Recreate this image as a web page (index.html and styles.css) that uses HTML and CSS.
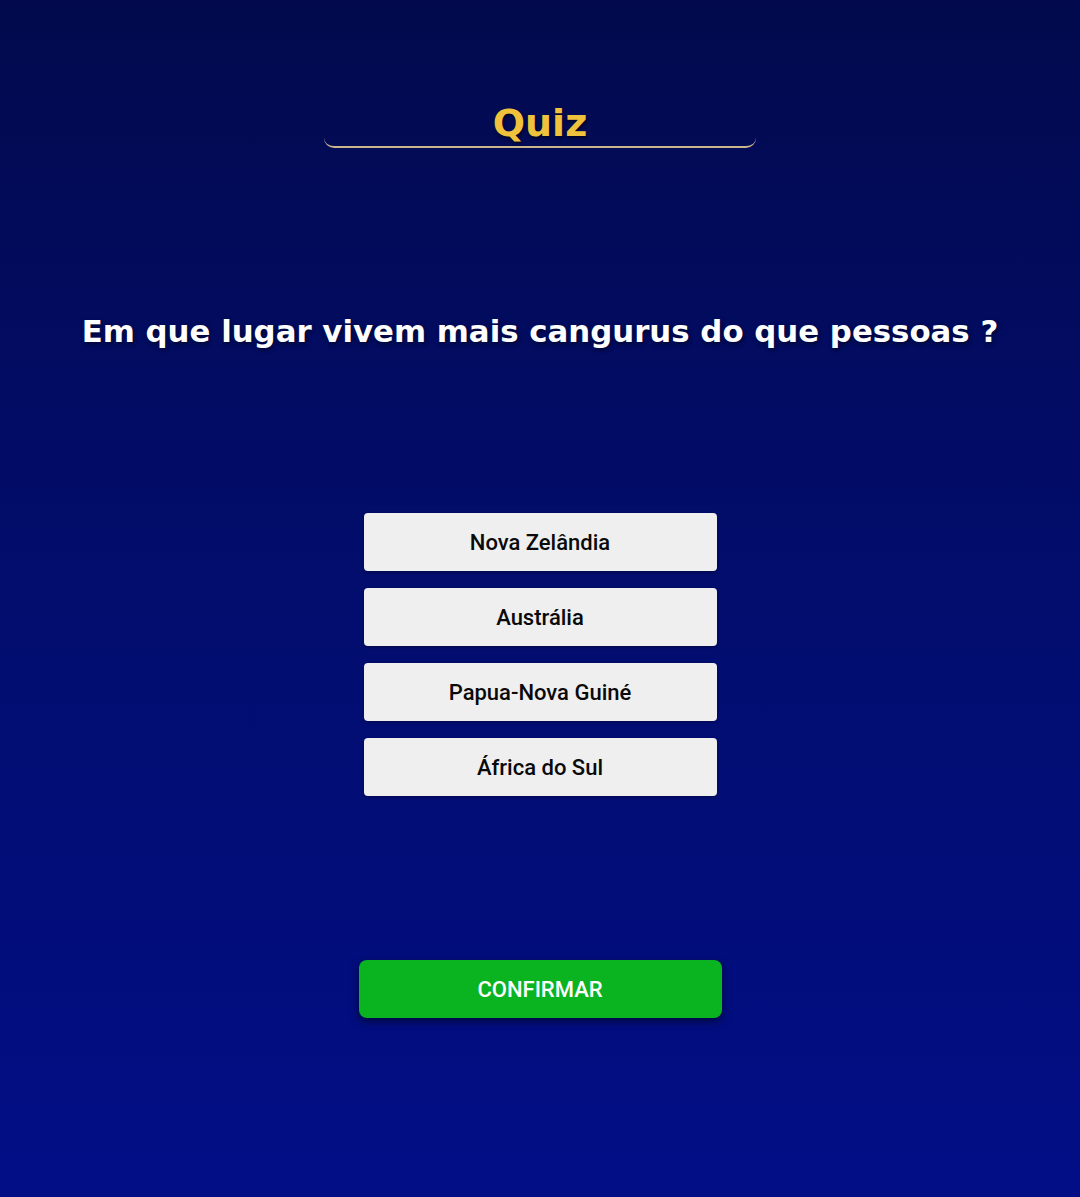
FILE: index.html
```html
<!DOCTYPE html>
<html lang="pt">
<head>
<meta charset="utf-8">
<title>Quiz</title>
<link rel="stylesheet" href="styles.css">
</head>
<body>
<main class="page">
  <header class="head">
    <h1 class="title">Quiz</h1>
  </header>
  <h2 class="question">Em que lugar vivem mais cangurus do que pessoas ?</h2>
  <div class="options">
    <button class="option">Nova Zelândia</button>
    <button class="option">Austrália</button>
    <button class="option">Papua-Nova Guiné</button>
    <button class="option">África do Sul</button>
  </div>
  <button class="confirm">CONFIRMAR</button>
</main>
</body>
</html>
```
FILE: styles.css
```css
html, body {
  margin: 0;
  padding: 0;
}
body {
  background: linear-gradient(to bottom, #020a4d 0%, #020d6e 50%, #020e86 100%);
  min-height: 1197px;
  font-family: Roboto, "Liberation Sans", sans-serif;
}
.page {
  display: flex;
  flex-direction: column;
  align-items: center;
  height: 1197px;
}
.head {
  padding-top: 100px;
}
.title {
  margin: 0;
  width: 432px;
  box-sizing: border-box;
  text-align: center;
  font-family: "DejaVu Sans", sans-serif;
  font-weight: bold;
  font-size: 38px;
  line-height: 46px;
  color: #f0c13c;
  text-shadow: 1px 2px 3px rgba(0,0,0,0.6);
  border-bottom: 2px solid #c9b58a;
  border-radius: 0 0 10px 10px;
  padding-bottom: 0;
}
.question {
  margin: 163px 0 0;
  font-family: "DejaVu Sans", sans-serif;
  font-weight: bold;
  font-size: 30.8px;
  line-height: 40px;
  color: #ffffff;
  text-shadow: 1px 2px 4px rgba(0,0,0,0.5);
  text-align: center;
}
.options {
  margin-top: 162px;
  display: flex;
  flex-direction: column;
  gap: 17px;
}
.option {
  width: 353px;
  height: 58px;
  border: none;
  border-radius: 4px;
  background: #efefef;
  font-family: Roboto, "Liberation Sans", sans-serif;
  font-weight: 500;
  font-size: 22px;
  color: #0a0a0a;
  box-shadow: 0 1px 3px rgba(0,0,0,0.4);
  padding: 0;
}
.confirm {
  margin-top: 164px;
  width: 363px;
  height: 58px;
  border: none;
  border-radius: 8px;
  background: #09b420;
  color: #fff;
  font-family: Roboto, "Liberation Sans", sans-serif;
  font-weight: 500;
  font-size: 22px;
  box-shadow: 0 3px 8px rgba(0,0,0,0.55);
  padding: 0;
}
```
